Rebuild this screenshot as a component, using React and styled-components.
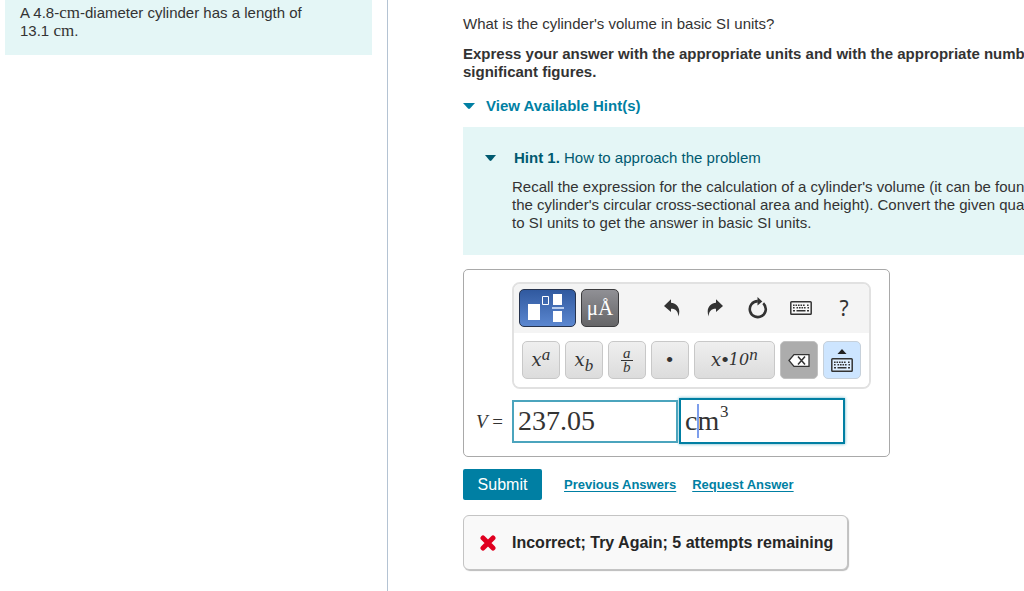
import React from "react";
import styled, { createGlobalStyle, css } from "styled-components";

const Global = createGlobalStyle`
  *, *::before, *::after { box-sizing: border-box; }
  html, body { margin: 0; background: #fff; }
  body {
    font: 15px/18px "Liberation Sans", Arial, sans-serif;
    color: #333;
    overflow: hidden;
  }
  p, h2, h3 { margin: 0; font: inherit; }
  button, input { font: inherit; color: inherit; }
`;

const serif = `"Liberation Serif", "Times New Roman", serif`;
const mathSerif = `"DejaVu Serif", Georgia, serif`;

const Page = styled.div`
  display: flex;
  min-height: 100vh;
`;

const Sidebar = styled.aside`
  flex: 0 0 388px;
  padding: 0 15px 0 5px;
  border-right: 1px solid #b4c3d3;
`;

const Given = styled.p`
  min-height: 55px;
  padding: 4px 60px 0 15px;
  background: #e4f6f6;
`;

const Unit = styled.span`
  font: 17px/1 ${serif};
`;

const Main = styled.main`
  flex: 1;
  min-width: 0;
  padding: 15px 0 21px 75px;
  overflow: hidden;
`;

const Question = styled.p`
  white-space: nowrap;
`;

const Instruction = styled.p`
  margin-top: 12px;
  font-weight: bold;
  white-space: nowrap;
`;

const Toggle = styled.button`
  display: flex;
  align-items: center;
  gap: ${(p) => p.$gap}px;
  padding: 0;
  border: 0;
  background: none;
  color: ${(p) => p.$color};
  font-weight: ${(p) => (p.$bold ? "bold" : "normal")};
  cursor: pointer;
`;

const HintsToggle = styled(Toggle)`
  margin-top: 16px;
`;

const Hint = styled.section`
  margin-top: 12px;
  padding: 22px 0 23px 22px;
  background: #e4f6f6;
  white-space: nowrap;
`;

const HintBody = styled.p`
  margin-top: 11px;
  padding-left: 27px;
`;

const AnswerBox = styled.form`
  width: 427px;
  margin-top: 14px;
  padding: 12px 18px 12px 12px;
  border: 1px solid #a9a9a9;
  border-radius: 5px;
`;

const Toolbar = styled.div`
  margin-left: 36px;
  border: 2px solid #e1e1e1;
  border-radius: 8px;
  overflow: hidden;
`;

const ToolRow = styled.div`
  display: flex;
  gap: 5px;
  padding: ${(p) => (p.$top ? "5px 5px 6px" : "8px")};
  background: ${(p) => (p.$top ? "#f4f4f4" : "#fff")};
`;

const looks = {
  blue: css`
    background: linear-gradient(#30599f, #5b87d0);
    border-color: #26334d;
  `,
  gray: css`
    background: linear-gradient(#909095, #656567);
    border-color: #3c3c3e;
    color: #fff;
  `,
  ghost: css`
    background: none;
    border-color: transparent;
  `,
  key: css`
    background: linear-gradient(#efefef, #dcdcdc);
    border-color: #c8c8c8;
  `,
  dark: css`
    background: #acacac;
    border-color: #c0c0c0;
  `,
  light: css`
    background: #cde5ff;
    border-color: #c6d0da;
  `,
};

const Tool = styled.button`
  display: flex;
  align-items: center;
  justify-content: center;
  width: ${(p) => p.$w || 38}px;
  height: 38px;
  padding: 0;
  border: 1px solid;
  border-radius: 5px;
  cursor: pointer;
  ${(p) => looks[p.$look || "key"]}
`;

const Spacer = styled.span`
  width: 24px;
`;

const Angstrom = styled.span`
  font: 21px/1 ${serif};
`;

const Help = styled.span`
  font: 21px/1 "Noto Sans", sans-serif;
`;

const Expr = styled.span`
  font: italic 18px/1 ${mathSerif};
  display: inline-flex;
  align-items: center;
`;

const Script = styled.span`
  font: italic 17px/1 ${serif};
  ${(p) => (p.$sub ? "padding-top: 10px;" : "padding-bottom: 12px;")}
`;

const Ten = styled.span`
  font-size: 16px;
`;

const Dot = styled.span`
  font: 22px/1 ${serif};
`;

const Fraction = styled.span`
  display: flex;
  flex-direction: column;
  width: 12px;
  font: italic 15px/12px ${serif};
  text-align: center;
`;

const Over = styled.span`
  padding-bottom: 1px;
  border-bottom: 1px solid #333;
`;

const AnswerRow = styled.div`
  display: flex;
  align-items: center;
  margin-top: 9px;
`;

const Label = styled.label`
  width: 36px;
  font: 19px/1 ${serif};
  white-space: nowrap;
`;

const ValueInput = styled.input`
  width: 166px;
  height: 43px;
  padding: 0 4px 1px;
  border: 2px solid #4ba4bd;
  background: #fff;
  font: 28px/1 ${serif};
  outline: 0;
`;

const UnitField = styled.div`
  position: relative;
  display: flex;
  width: 166px;
  height: 46px;
  margin-left: 1px;
  padding-left: 4px;
  border: 2px solid #007fa3;
  box-shadow: 0 0 3px #5bb0c6;
`;

const UnitInput = styled.input`
  width: 35px;
  padding: 0;
  border: 0;
  background: none;
  font: 28px/1 ${serif};
  outline: 0;
`;

const PowerInput = styled(UnitInput)`
  flex: 1;
  min-width: 0;
  height: 24px;
  font-size: 17px;
`;

const Caret = styled.span`
  position: absolute;
  top: 4px;
  left: 16px;
  width: 2px;
  height: 34px;
  background: #7d9eec;
`;

const Actions = styled.div`
  display: flex;
  align-items: center;
  margin-top: 12px;
  font-size: 13px;
  font-weight: bold;
`;

const Submit = styled.button`
  width: 79px;
  height: 31px;
  margin-right: 22px;
  padding: 0;
  border: 0;
  border-radius: 2px;
  background: #007fa3;
  color: #fff;
  font-size: 16px;
  font-weight: normal;
  cursor: pointer;
`;

const Link = styled.a`
  margin-right: 16px;
  color: #007fa3;
  text-underline-offset: 2px;
`;

const Feedback = styled.div`
  display: flex;
  align-items: center;
  gap: 16px;
  width: 385px;
  height: 55px;
  margin-top: 15px;
  padding-left: 16px;
  border: 1px solid #c4c4c4;
  border-radius: 6px;
  background: #f9f9f9;
  box-shadow: 1px 1px 1px #bbb;
  font-size: 16px;
  font-weight: bold;
  white-space: nowrap;
  color: #262626;
`;

const Triangle = ({ w }) => (
  <svg width={w} height="6" viewBox="0 0 12 6" preserveAspectRatio="none" aria-hidden="true">
    <path d="M0 0H12L7 5.5Q6 6.3 5 5.5Z" fill="currentColor" />
  </svg>
);

const TemplatesIcon = () => (
  <svg width="39" height="28" viewBox="0 0 39 28" aria-hidden="true">
    <g fill="#fff">
      <path d="M0 10h12v16H0zM25 0h9v11h-9zM25 17h9v11h-9z" />
      <path d="M24 13h12v2H24z" fill="#b9cdee" />
    </g>
    <path d="M14.500 2.500h6v8h-6z" fill="none" stroke="#fff" />
  </svg>
);

const ArrowIcon = ({ flip }) => (
  <svg width="16" height="18" viewBox="0 0 16 18" aria-hidden="true">
    <path
      transform={flip ? "translate(16 0) scale(-1 1)" : undefined}
      d="M0 7L7 .3V3.700C12.500 4 17.500 9 14.300 17.500C14.200 12 11.500 9.600 7 9.700V13Z"
      fill="#333"
    />
  </svg>
);

const ResetIcon = () => (
  <svg width="20" height="22" viewBox="0 0 20 22" aria-hidden="true">
    <path d="M15.200 6.200A8 8 0 1 1 9.800 4.100" fill="none" stroke="#333" strokeWidth="2.600" />
    <path d="M9.500 0L14.300 4.600L9.500 8.500Z" fill="#333" />
  </svg>
);

const KeyboardShape = () => (
  <g>
    <rect x=".8" y=".8" width="20.400" height="12.400" rx=".8" fill="#fff" fillOpacity=".35" stroke="#333" strokeWidth="1.500" />
    <path
      d="M3 4.200H15M17 4.200H19M3 6.700H5M6.500 6.700H16M17.500 6.700H19"
      stroke="#333"
      strokeWidth="1.600"
      strokeDasharray="1.600 .9"
    />
    <path d="M3 9.800H5M6.500 9.800H15.500M17 9.800H19" stroke="#333" strokeWidth="1.600" />
  </g>
);

const KeyboardIcon = () => (
  <svg width="22" height="14" viewBox="0 0 22 14" aria-hidden="true">
    <KeyboardShape />
  </svg>
);

const KeyboardUpIcon = () => (
  <svg width="22" height="23" viewBox="0 0 22 23" aria-hidden="true">
    <path d="M6.500 5L11 0L15.500 5Z" fill="#222" />
    <g transform="translate(0 9)">
      <KeyboardShape />
    </g>
  </svg>
);

const DeleteIcon = () => (
  <svg width="22" height="13" viewBox="0 0 22 13" aria-hidden="true">
    <path d="M1 6.500L6 .7H21V12.300H6Z" fill="#fff" stroke="#333" strokeWidth="1.300" />
    <path d="M10 2.500L17 10.500M17 2.500L10 10.500" stroke="#333" strokeWidth="1.500" />
  </svg>
);

const WrongIcon = () => (
  <svg width="16" height="16" viewBox="0 0 16 16" aria-hidden="true">
    <path d="M3 3L13 13M13 3L3 13" stroke="#e00020" strokeWidth="5" strokeLinecap="round" />
  </svg>
);

export default function App() {
  return (
    <>
      <Global />
      <Page>
        <Sidebar>
          <Given>
            A 4.8-<Unit>cm</Unit>-diameter cylinder has a length of 13.1 <Unit>cm</Unit>.
          </Given>
        </Sidebar>
        <Main>
          <Question>What is the cylinder's volume in basic SI units?</Question>
          <Instruction>
            Express your answer with the appropriate units and with the appropriate number of
            <br />
            significant figures.
          </Instruction>
          <HintsToggle type="button" $gap={11} $color="#007fa3" $bold>
            <Triangle w={12} />
            View Available Hint(s)
          </HintsToggle>
          <Hint>
            <Toggle type="button" $gap={18} $color="#005a70">
              <Triangle w={11} />
              <span>
                <b>Hint 1.</b> How to approach the problem
              </span>
            </Toggle>
            <HintBody>
              Recall the expression for the calculation of a cylinder's volume (it can be found
              <br />
              the cylinder's circular cross-sectional area and height). Convert the given quantities
              <br />
              to SI units to get the answer in basic SI units.
            </HintBody>
          </Hint>
          <AnswerBox onSubmit={(e) => e.preventDefault()}>
            <Toolbar role="toolbar">
              <ToolRow $top>
                <Tool type="button" $look="blue" $w={57} aria-label="Templates">
                  <TemplatesIcon />
                </Tool>
                <Tool type="button" $look="gray">
                  <Angstrom>μÅ</Angstrom>
                </Tool>
                <Spacer />
                <Tool type="button" $look="ghost" aria-label="Undo">
                  <ArrowIcon />
                </Tool>
                <Tool type="button" $look="ghost" aria-label="Redo">
                  <ArrowIcon flip />
                </Tool>
                <Tool type="button" $look="ghost" aria-label="Reset">
                  <ResetIcon />
                </Tool>
                <Tool type="button" $look="ghost" aria-label="Keyboard shortcuts">
                  <KeyboardIcon />
                </Tool>
                <Tool type="button" $look="ghost">
                  <Help>?</Help>
                </Tool>
              </ToolRow>
              <ToolRow>
                <Tool type="button">
                  <Expr>
                    x<Script>a</Script>
                  </Expr>
                </Tool>
                <Tool type="button">
                  <Expr>
                    x<Script $sub>b</Script>
                  </Expr>
                </Tool>
                <Tool type="button">
                  <Fraction>
                    <Over>a</Over>
                    <span>b</span>
                  </Fraction>
                </Tool>
                <Tool type="button">
                  <Dot>•</Dot>
                </Tool>
                <Tool type="button" $w={82}>
                  <Expr>
                    x<Dot>•</Dot>
                    <Ten>10</Ten>
                    <Script>n</Script>
                  </Expr>
                </Tool>
                <Tool type="button" $look="dark" aria-label="Delete">
                  <DeleteIcon />
                </Tool>
                <Tool type="button" $look="light" aria-label="Show keyboard">
                  <KeyboardUpIcon />
                </Tool>
              </ToolRow>
            </Toolbar>
            <AnswerRow>
              <Label htmlFor="value">
                <i>V</i> =
              </Label>
              <ValueInput id="value" defaultValue="237.05" />
              <UnitField>
                <UnitInput aria-label="Units" defaultValue="cm" />
                <PowerInput aria-label="Exponent" defaultValue="3" />
                <Caret />
              </UnitField>
            </AnswerRow>
          </AnswerBox>
          <Actions>
            <Submit type="button">Submit</Submit>
            <Link href="#previous">Previous Answers</Link>
            <Link href="#request">Request Answer</Link>
          </Actions>
          <Feedback role="status">
            <WrongIcon />
            Incorrect; Try Again; 5 attempts remaining
          </Feedback>
        </Main>
      </Page>
    </>
  );
}
